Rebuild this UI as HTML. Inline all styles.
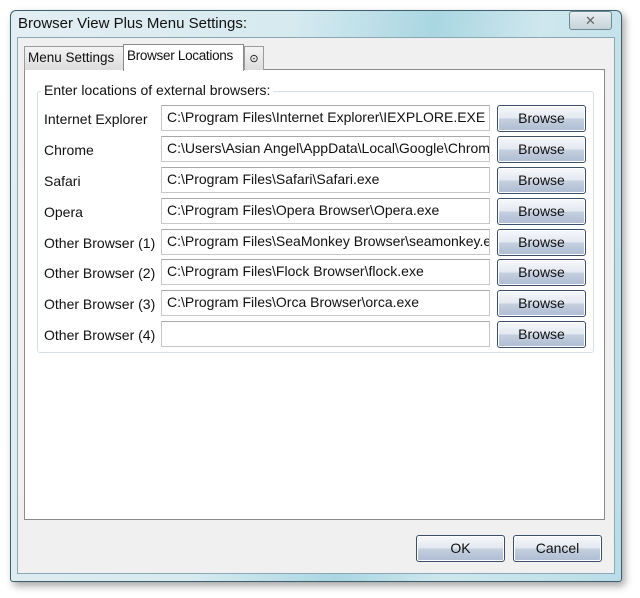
<!DOCTYPE html><html><head><style>
body{margin:0;width:640px;height:598px;background:#fff;position:relative;overflow:hidden;font-family:"Liberation Sans",sans-serif;font-size:14px;color:#111}
.a{position:absolute;box-sizing:border-box;white-space:nowrap}
.frame{left:10px;top:10px;width:612px;height:572px;border:1px solid #3d5f6c;border-radius:6px 6px 3px 3px;background:linear-gradient(100deg,#e2eef2 0%,#d6eaf0 40%,#a9d6e2 60%,#cfe7ee 75%,#b9dde7 100%);box-shadow:3px 4px 8px rgba(0,0,0,.35)}
.client{left:17px;top:37px;width:598px;height:537px;background:#f0f0f0;border:1px solid #8aa8b3}
.inp{left:161px;width:329px;height:26px;background:#fff;border:1px solid #c8c8c8;border-top-color:#a8a8a8;padding:3px 0 0 5px;overflow:hidden}
.btn{width:89px;height:27px;border:1px solid #3c4f6a;border-radius:3px;background:linear-gradient(#f6f8fb,#e3e8f0 50%,#c5d0df 51%,#aebcd2);text-align:center;padding-top:4px;box-shadow:inset 0 0 0 1px #fff}
.lbl{left:44px}
</style></head><body>
<div class="a frame"></div>
<div class="a" style="left:18px;top:15px;font-size:15px">Browser View Plus Menu Settings:</div>
<div class="a" style="left:569px;top:11px;width:43px;height:19px;border:1px solid #6a8a96;border-radius:3px;background:linear-gradient(#e8eef0,#c5d3d8);text-align:center;font-size:13px;color:#666;line-height:17px">✕</div>
<div class="a client"></div>
<div class="a" style="left:24px;top:69px;width:581px;height:451px;background:#fff;border:1px solid #8a8a8a"></div>
<div class="a" style="left:24px;top:46px;width:100px;height:24px;background:linear-gradient(#f4f4f4,#dcdcdc);border:1px solid #9a9a9a;border-bottom:none;padding:3px 0 0 3px;font-size:13.5px">Menu Settings</div>
<div class="a" style="left:123px;top:44px;width:121px;height:27px;background:#fff;border:1px solid #8a8a8a;border-bottom:none;padding:3px 0 0 3px;font-size:13.5px;letter-spacing:-0.3px;overflow:hidden">Browser Locations</div>
<div class="a" style="left:244px;top:46px;width:20px;height:24px;background:linear-gradient(#f4f4f4,#dcdcdc);border:1px solid #9a9a9a;border-bottom:none;font-size:11px;text-align:center;padding-top:5px">⊙</div>
<div class="a" style="left:37px;top:91px;width:557px;height:262px;border:1px solid #d5dfe5;border-radius:3px"></div>
<div class="a" style="left:41px;top:82px;background:#fff;padding:0 3px">Enter locations of external browsers:</div>

<div class="a lbl" style="top:111px">Internet Explorer</div><div class="a inp" style="top:105px">C:\Program Files\Internet Explorer\IEXPLORE.EXE</div><div class="a btn" style="left:497px;top:105px">Browse</div>
<div class="a lbl" style="top:142px">Chrome</div><div class="a inp" style="top:136px">C:\Users\Asian Angel\AppData\Local\Google\Chrome</div><div class="a btn" style="left:497px;top:136px">Browse</div>
<div class="a lbl" style="top:173px">Safari</div><div class="a inp" style="top:167px">C:\Program Files\Safari\Safari.exe</div><div class="a btn" style="left:497px;top:167px">Browse</div>
<div class="a lbl" style="top:204px">Opera</div><div class="a inp" style="top:198px">C:\Program Files\Opera Browser\Opera.exe</div><div class="a btn" style="left:497px;top:198px">Browse</div>
<div class="a lbl" style="top:235px">Other Browser (1)</div><div class="a inp" style="top:229px">C:\Program Files\SeaMonkey Browser\seamonkey.exe</div><div class="a btn" style="left:497px;top:229px">Browse</div>
<div class="a lbl" style="top:265px">Other Browser (2)</div><div class="a inp" style="top:259px">C:\Program Files\Flock Browser\flock.exe</div><div class="a btn" style="left:497px;top:259px">Browse</div>
<div class="a lbl" style="top:296px">Other Browser (3)</div><div class="a inp" style="top:290px">C:\Program Files\Orca Browser\orca.exe</div><div class="a btn" style="left:497px;top:290px">Browse</div>
<div class="a lbl" style="top:327px">Other Browser (4)</div><div class="a inp" style="top:321px"></div><div class="a btn" style="left:497px;top:321px">Browse</div>

<div class="a btn" style="left:416px;top:535px;width:89px;height:27px">OK</div>
<div class="a btn" style="left:513px;top:535px;width:89px;height:27px">Cancel</div>
</body></html>
